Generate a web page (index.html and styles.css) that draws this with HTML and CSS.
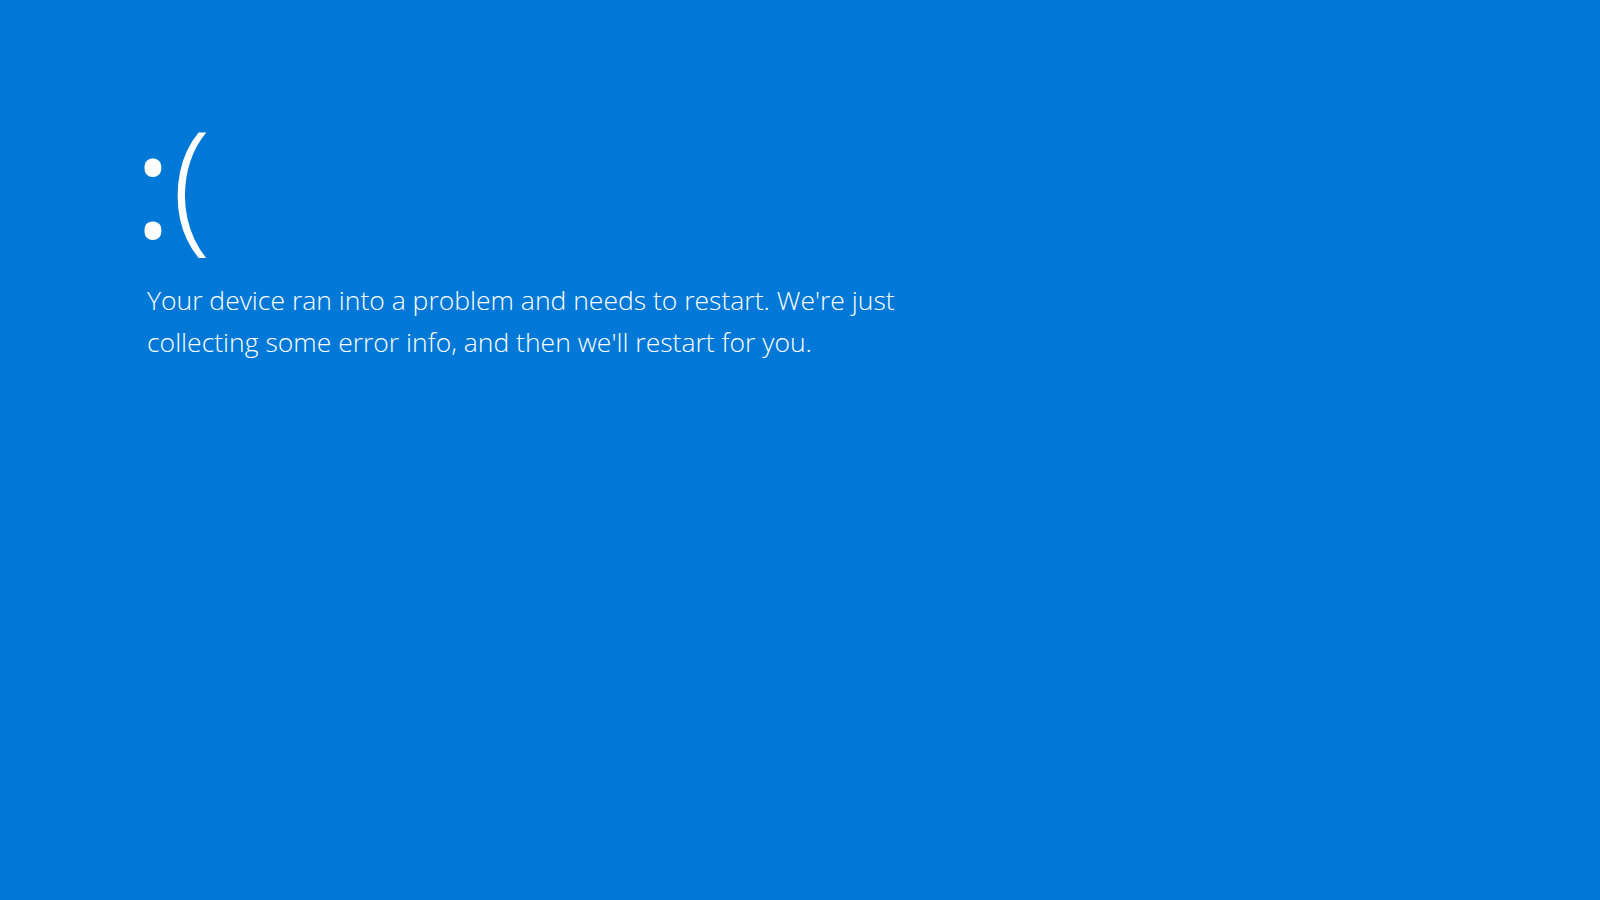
FILE: index.html
```html
<!DOCTYPE html>
<html lang="en">
<head>
<meta charset="utf-8">
<title>Blue Screen</title>
<link rel="stylesheet" href="styles.css">
</head>
<body>
<main class="screen">
  <div class="face"><span class="colon">:</span><span class="paren">(</span></div>
  <p class="message">Your device ran into a problem and needs to restart. We're just collecting some error info, and then we'll restart for you.</p>
</main>
</body>
</html>
```
FILE: styles.css
```css
html, body {
  margin: 0;
  padding: 0;
  width: 100%;
  height: 100%;
  background: #0078d7;
  overflow: hidden;
}
.screen {
  box-sizing: border-box;
  height: 100%;
  padding: 107px 0 0 147px;
  color: #ffffff;
  font-family: "Open Sans", "Noto Sans", sans-serif;
  font-weight: 300;
}
.face {
  font-size: 144px;
  line-height: 144px;
  height: 144px;
  margin: 0 0 0 -13px;
  white-space: nowrap;
}
.colon {
  font-weight: 400;
  vertical-align: -3px;
}
.paren {
  font-weight: 300;
}
.message {
  margin: 28px 0 0 0;
  width: 800px;
  font-size: 26.5px;
  line-height: 42px;
}
```
